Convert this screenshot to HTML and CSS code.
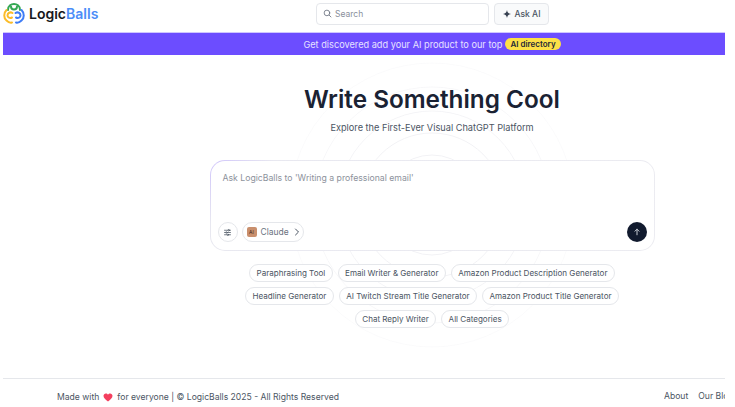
FILE: index.html
```html
<!DOCTYPE html>
<html lang="en">
<head>
  <meta charset="UTF-8">
  <title>LogicBalls</title>
  <link rel="stylesheet" href="styles.css">
</head>
<body>
  <div class="page">
    <header class="topbar">
      <a class="brand" href="#">
        <svg class="brand-icon" viewBox="0 0 22 21" fill="none" stroke-width="2" stroke-linecap="round">
          <path d="M5 7C5 2.500 8.500 1 11 1s6 1.500 6 6" stroke="#34a853"/>
          <path d="M8 3.500c0 4 6 4 6 0" stroke="#34a853"/>
          <path d="M3.500 7C.5 10 .5 15 3.500 17.500 5 19 7 20 9 19.500" stroke="#fbbc28"/>
          <path d="M9.500 10C7 8.500 4.500 10 4.500 12.500c0 2 2.500 3 4.500 2" stroke="#fbbc28"/>
          <path d="M18.500 7c3 3 3 8 0 10.500-1.500 1.500-3.500 2.500-5.500 2" stroke="#3f7df6"/>
          <path d="M12.500 10c2.500-1.500 5-.0 5 2.500 0 2-2.500 3-4.500 2" stroke="#3f7df6"/>
        </svg>
        <span class="brand-name">Logic<span class="brand-accent">Balls</span></span>
      </a>
      <div class="top-actions">
        <div class="search">
          <svg class="search-icon" viewBox="0 0 16 16" fill="none" stroke="#6b7280" stroke-width="1.500" stroke-linecap="round">
            <circle cx="7" cy="7" r="5"/>
            <path d="M11 11l3.200 3.200"/>
          </svg>
          <span>Search</span>
        </div>
        <button class="ask-btn" type="button">
          <svg class="ask-icon" viewBox="0 0 12 12"><path d="M6 0c.5 3.600 2.400 5.500 6 6-3.600.5-5.500 2.400-6 6-.5-3.600-2.400-5.500-6-6 3.600-.5 5.500-2.400 6-6z" fill="#374151"/></svg>
          Ask AI
        </button>
      </div>
    </header>

    <div class="banner">
      Get discovered add your AI product to our top
      <span class="banner-tag">AI directory</span>
    </div>

    <main class="hero">
      <svg class="rings" viewBox="0 0 360 360" fill="none" stroke="#f2f2f5">
        <circle cx="180" cy="180" r="30"/>
        <circle cx="180" cy="180" r="50"/>
        <circle cx="180" cy="180" r="72"/>
        <circle cx="180" cy="180" r="94"/>
        <circle cx="180" cy="180" r="118"/>
        <circle cx="180" cy="180" r="142"/>
      </svg>
      <h1>Write Something Cool</h1>
      <p class="subtitle">Explore the First-Ever Visual ChatGPT Platform</p>

      <div class="prompt-wrap">
        <div class="prompt">
          <div class="prompt-text">Ask LogicBalls to 'Writing a professional email'</div>
          <div class="prompt-tools">
            <div class="tools-left">
              <button class="round-btn" type="button">
                <svg viewBox="0 0 12 12" fill="none" stroke="#4b5563" stroke-width="1" stroke-linecap="round">
                  <path d="M2 3h8M2 6h8M2 9h8"/>
                  <circle cx="7.500" cy="3" r="1" fill="#fff"/>
                  <circle cx="4.500" cy="6" r="1" fill="#fff"/>
                  <circle cx="6.500" cy="9" r="1" fill="#fff"/>
                </svg>
              </button>
              <button class="model-btn" type="button">
                <span class="model-icon">AI</span>
                Claude
                <svg class="chevron" viewBox="0 0 8 8" fill="none" stroke="#4b5563" stroke-width="1" stroke-linecap="round" stroke-linejoin="round"><path d="M2.500 1l3 3-3 3"/></svg>
              </button>
            </div>
            <button class="send-btn" type="button">
              <svg viewBox="0 0 10 10" fill="none" stroke="#d1d5db" stroke-width="1.200" stroke-linecap="round" stroke-linejoin="round"><path d="M5 8.500v-7M2.500 4L5 1.500 7.500 4"/></svg>
            </button>
          </div>
        </div>
      </div>

      <div class="chips">
        <a class="chip" href="#">Paraphrasing Tool</a>
        <a class="chip" href="#">Email Writer &amp; Generator</a>
        <a class="chip" href="#">Amazon Product Description Generator</a>
        <a class="chip" href="#">Headline Generator</a>
        <a class="chip" href="#">AI Twitch Stream Title Generator</a>
        <a class="chip" href="#">Amazon Product Title Generator</a>
        <a class="chip" href="#">Chat Reply Writer</a>
        <a class="chip" href="#">All Categories</a>
      </div>
    </main>

    <footer class="footer">
      <div class="footer-left">
        Made with
        <svg class="heart" viewBox="0 0 12 11"><path d="M6 10.500C2.500 8 .5 6 .5 3.500.5 1.700 1.900.5 3.400.5 4.500.5 5.500 1.100 6 2c.5-.9 1.500-1.500 2.600-1.500 1.500 0 2.900 1.200 2.900 3 0 2.500-2 4.500-5.500 7z" fill="#f43f5e"/></svg>
        for everyone | © LogicBalls 2025 - All Rights Reserved
      </div>
      <nav class="footer-links">
        <a href="#">About</a>
        <a href="#">Our Blog</a>
      </nav>
    </footer>
  </div>
</body>
</html>
```

FILE: styles.css
```css
html, body {
  margin: 0;
  padding: 0;
  height: 100%;
  background: #fff;
  overflow: hidden;
}
body {
  font-family: Inter, "Liberation Sans", sans-serif;
  color: #4b5563;
}
a {
  color: inherit;
  text-decoration: none;
}
button {
  font-family: inherit;
}
.page {
  width: 722px;
  height: 407px;
  margin-left: 3px;
  display: flex;
  flex-direction: column;
  overflow: hidden;
}

/* header */
.topbar {
  height: 32px;
  flex: none;
  display: flex;
  align-items: center;
  box-sizing: border-box;
  padding-top: 2px;
  padding-bottom: 7px;
}
.brand {
  display: flex;
  align-items: center;
  gap: 4px;
  width: 96px;
}
.brand-icon {
  width: 22px;
  height: 21px;
}
.brand-name {
  font-size: 14px;
  font-weight: 600;
  color: #17181c;
}
.brand-accent {
  color: #4b8df8;
}
.top-actions {
  margin-left: 217px;
  display: flex;
  gap: 5px;
}
.search {
  width: 173px;
  height: 22px;
  box-sizing: border-box;
  border: 1px solid #e5e7eb;
  border-radius: 4px;
  display: flex;
  align-items: center;
  gap: 3px;
  padding-left: 6px;
  font-size: 8.500px;
  color: #8a909c;
}
.search-icon {
  width: 9px;
  height: 9px;
}
.ask-btn {
  width: 55px;
  height: 22px;
  border: 1px solid #e5e7eb;
  border-radius: 4px;
  background: #f9fafb;
  color: #4b5563;
  font-size: 8.500px;
  font-weight: 500;
  display: flex;
  align-items: center;
  justify-content: center;
  gap: 4px;
  padding: 0;
}
.ask-icon {
  width: 8px;
  height: 8px;
}

/* banner */
.banner {
  height: 23px;
  flex: none;
  background: #6c4dff;
  border-top: 1px solid #cfc6ff;
  box-sizing: border-box;
  color: #e6e1ff;
  font-size: 9.200px;
  display: flex;
  align-items: center;
  justify-content: center;
  gap: 3px;
  padding-left: 136px;
  white-space: nowrap;
}
.banner-tag {
  background: #fde047;
  color: #1f2937;
  font-size: 8px;
  font-weight: 600;
  border-radius: 7px;
  padding: 1px 5px;
}

/* hero, its content is centred right of the empty side column */
.hero {
  flex: 1;
  position: relative;
  display: flex;
  flex-direction: column;
  align-items: center;
  padding: 30px 0 0 136px;
  box-sizing: border-box;
  min-height: 0;
}
.rings {
  position: absolute;
  left: 249px;
  top: -30px;
  width: 360px;
  height: 360px;
  -webkit-mask-image: radial-gradient(circle, #000 0, #000 30%, transparent 68%);
  mask-image: radial-gradient(circle, #000 0, #000 30%, transparent 68%);
}
h1 {
  position: relative;
  margin: 0;
  font-size: 24.300px;
  line-height: 29px;
  font-weight: 600;
  color: #1a2233;
}
.subtitle {
  position: relative;
  margin: 7px 0 0;
  font-size: 9.200px;
  line-height: 14px;
  color: #4b5563;
}
.prompt-wrap {
  position: relative;
  margin-top: 25px;
  width: 445px;
  height: 91px;
  padding: 1px;
  box-sizing: border-box;
  border-radius: 15px;
  background: linear-gradient(135deg, #cfc4fb 0, #e8e8f0 12%, #ececf1 100%);
}
.prompt {
  height: 100%;
  box-sizing: border-box;
  background: #fff;
  border-radius: 14px;
  padding: 12px 7px 8px;
  display: flex;
  flex-direction: column;
  justify-content: space-between;
}
.prompt-text {
  font-size: 8.700px;
  color: #8d929c;
  padding-left: 5px;
}
.prompt-tools {
  display: flex;
  justify-content: space-between;
  align-items: center;
}
.tools-left {
  display: flex;
  align-items: center;
  gap: 4px;
}
.round-btn {
  width: 20px;
  height: 20px;
  border-radius: 50%;
  border: 1px solid #e5e7eb;
  background: #fff;
  padding: 0;
  display: flex;
  align-items: center;
  justify-content: center;
}
.round-btn svg {
  width: 9px;
  height: 9px;
}
.model-btn {
  height: 20px;
  width: 62px;
  box-sizing: border-box;
  border-radius: 10px;
  border: 1px solid #e5e7eb;
  background: #fff;
  color: #6b7280;
  font-size: 8.500px;
  display: flex;
  align-items: center;
  gap: 4px;
  padding: 0 0 0 4px;
}
.model-icon {
  width: 10px;
  height: 10px;
  border-radius: 2px;
  background: #c98f6d;
  color: #3f2a1e;
  font-size: 5px;
  line-height: 10px;
  text-align: center;
}
.chevron {
  width: 8px;
  height: 8px;
}
.send-btn {
  width: 20px;
  height: 20px;
  border-radius: 50%;
  border: none;
  background: #111a2e;
  padding: 0;
  display: flex;
  align-items: center;
  justify-content: center;
}
.send-btn svg {
  width: 8px;
  height: 8px;
}

/* suggestion chips */
.chips {
  position: relative;
  width: 400px;
  margin-top: 13px;
  display: flex;
  flex-wrap: wrap;
  justify-content: center;
  gap: 5px;
}
.chip {
  height: 18px;
  box-sizing: border-box;
  border: 1px solid #e5e7eb;
  border-radius: 9px;
  padding: 0 6.400px;
  font-size: 8.050px;
  line-height: 16px;
  color: #4b5563;
  background: #fff;
  white-space: nowrap;
}

/* footer */
.footer {
  height: 29px;
  flex: none;
  border-top: 1px solid #e5e7eb;
  display: flex;
  justify-content: space-between;
  font-size: 8.600px;
  color: #4b5563;
  padding: 12px 0 0 54px;
  box-sizing: border-box;
  white-space: nowrap;
}
.footer-left {
  display: flex;
  align-items: center;
  gap: 4px;
  height: 12px;
}
.heart {
  width: 10px;
  height: 9px;
}
.footer-links {
  display: flex;
  gap: 10px;
  width: 61px;
  overflow: hidden;
  height: 12px;
}
```
